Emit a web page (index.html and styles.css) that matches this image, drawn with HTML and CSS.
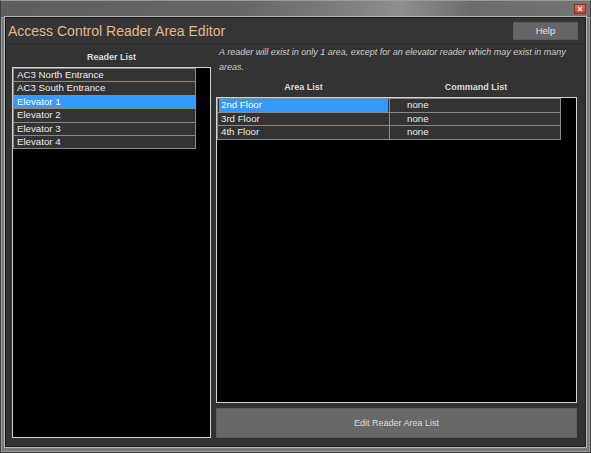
FILE: index.html
```html
<!DOCTYPE html>
<html>
<head>
<meta charset="utf-8">
<link rel="stylesheet" href="styles.css">
</head>
<body>
<div class="window">
  <div class="titlebar">
    <div class="close"><svg width="6" height="6" viewBox="0 0 6 6"><path d="M1 1L5 5M5 1L1 5" stroke="#f4e4e0" stroke-width="1.4"/></svg></div>
  </div>
  <div class="frame">
    <div class="client">
      <div class="header">
        <div class="title">Access Control Reader Area Editor</div>
        <div class="help">Help</div>
      </div>
      <div class="body">
        <div class="col-left">
          <div class="label">Reader List</div>
          <div class="listbox">
            <div class="rows reader-rows">
              <div class="row">AC3 North Entrance</div>
              <div class="row">AC3 South Entrance</div>
              <div class="row selected">Elevator 1</div>
              <div class="row">Elevator 2</div>
              <div class="row">Elevator 3</div>
              <div class="row">Elevator 4</div>
            </div>
          </div>
        </div>
        <div class="col-right">
          <p class="note">A reader will exist in only 1 area, except for an elevator reader which may exist in many areas.</p>
          <div class="heads">
            <div class="label">Area List</div>
            <div class="label">Command List</div>
          </div>
          <div class="tablebox">
            <div class="rows area-rows">
              <div class="arow"><div class="cell c1"><span class="sel">2nd Floor</span></div><div class="cell c2">none</div></div>
              <div class="arow"><div class="cell c1"><span>3rd Floor</span></div><div class="cell c2">none</div></div>
              <div class="arow"><div class="cell c1"><span>4th Floor</span></div><div class="cell c2">none</div></div>
            </div>
          </div>
          <div class="editbtn">Edit Reader Area List</div>
        </div>
      </div>
    </div>
  </div>
</div>
</body>
</html>
```
FILE: styles.css
```css
* { box-sizing: border-box; }
html, body { margin: 0; padding: 0; }
body { width: 591px; height: 453px; background: #6a6a6a; font-family: "Liberation Sans", Arial, sans-serif; overflow: hidden; }

.window {
  width: 591px; height: 453px;
  border: 1px solid #3e3e3e;
  border-top-color: #9a9a9a;
  background: linear-gradient(to right, #5e5e5e 0%, #666 40%, #7e7e7e 58%, #8e8e8e 68%, #6c6c6c 80%, #747474 100%);
  display: flex; flex-direction: column;
}
.titlebar { height: 16px; position: relative; flex: none; }
.close {
  position: absolute; right: 4px; top: 3px;
  width: 12px; height: 10px;
  background: linear-gradient(#e0705a, #c04530);
  border: 1px solid #8a3322;
  display: flex; align-items: center; justify-content: center;
}
.close svg { display: block; }

.frame { flex: 1; padding: 0 4px 5px 4px; display: flex; background: #7a7a7a; box-shadow: inset 0 0 0 1px #9a9a9a; }
.client {
  flex: 1;
  border: 1px solid #1e1e1e;
  box-shadow: 0 0 0 1px #b4b4b4;
  background: #333;
  display: flex; flex-direction: column;
}
.header {
  height: 26px; flex: none;
  background: #353535;
  border-bottom: 1px solid #2a2a2a;
  display: flex; align-items: center; justify-content: space-between;
  padding: 0 7px 0 2px;
}
.title { color: #e4b88e; font-size: 14px; line-height: 16px; padding-top: 1px; }
.help {
  width: 65px; height: 18px;
  background: #666; border: 1px solid #5c5c5c;
  color: #e2e2e2; font-size: 9.5px;
  display: flex; align-items: center; justify-content: center;
}

.body {
  flex: 1;
  display: grid; grid-template-columns: 199px 361px; column-gap: 5px;
  padding: 0 0 8px 6px;
}
.col-left { display: flex; flex-direction: column; }
.col-right { display: flex; flex-direction: column; }

.label { color: #dcdcdc; font-size: 9px; font-weight: bold; text-align: center; line-height: 11px; }
.col-left > .label { height: 23px; display: flex; align-items: flex-end; justify-content: center; padding-bottom: 4px; }

.listbox {
  flex: 1;
  background: #000;
  border: 1px solid #d4d4d4;
  padding-right: 14px;
}
.rows { display: flex; flex-direction: column; }
.row {
  height: 13.4px;
  border: 1px solid #8a8a8a; border-bottom: none;
  background: #333;
  color: #ececec; font-size: 9.7px; line-height: 12.5px;
  padding-left: 3px;
  white-space: nowrap;
}
.row:last-child { border-bottom: 1px solid #8a8a8a; height: 14.4px; }
.row.selected { background: #3399ff; color: #fff; }

.note {
  margin: 0; height: 31px;
  padding: 1px 0 0 3px;
  color: #cfcfcf; font-size: 9px; font-style: italic; line-height: 15px;
}
.heads { height: 22px; display: grid; grid-template-columns: 173px 172px; align-items: end; padding-bottom: 4px; padding-left: 1px; }

.tablebox {
  height: 306px; flex: none;
  background: #000;
  border: 1px solid #d4d4d4;
  padding-right: 14px;
}
.arow { display: grid; grid-template-columns: 172px 172px; height: 13.5px; }
.arow:last-child { height: 14.5px; }
.cell {
  border: 1px solid #8a8a8a; border-bottom: none;
  background: #333;
  color: #ececec; font-size: 9.7px; line-height: 12px;
  white-space: nowrap;
}
.arow:last-child .cell { border-bottom: 1px solid #8a8a8a; }
.c1 { border-right: none; padding: 0 1px 0 1px; display: flex; }
.c1 span { flex: 1; padding-left: 2px; }
.c1 span.sel { background: #3399ff; color: #fff; }
.c2 { padding-left: 17px; }

.editbtn {
  margin-top: 5px; height: 30px; flex: none;
  background: #686868; border: 1px solid #5e5e5e;
  color: #dedede; font-size: 9px;
  display: flex; align-items: center; justify-content: center;
}
```
